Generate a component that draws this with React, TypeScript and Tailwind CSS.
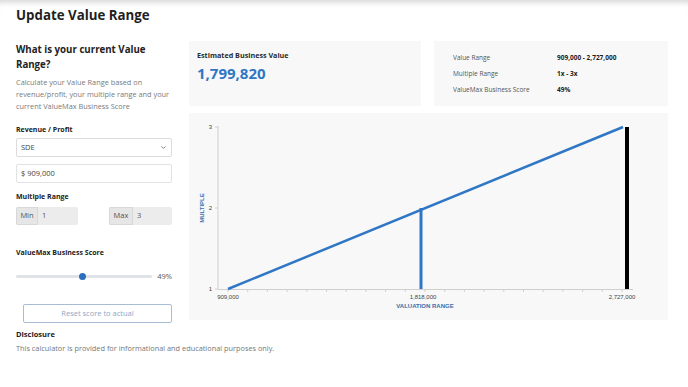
import { ChevronDown } from 'lucide-react';

const BLUE = '#2f77c4';

function ValueChart(): React.ReactElement {
    // x: 909,000 -> 39, 2,727,000 -> 433 ; y: 3 -> 14, 1 -> 176
    const ticks = Array.from({ length: 21 }, (_, i) => 39 + i * 19.7);
    return (
        <svg width="479" height="207" viewBox="0 0 479 207" className="block">
            <line x1="29" y1="13" x2="29" y2="176" stroke="#cfcfcf" strokeWidth="1" />
            <line x1="29" y1="176.5" x2="444" y2="176.5" stroke="#cfcfcf" strokeWidth="1" />
            {[14, 95, 176].map((y) => (
                <line key={y} x1="26" y1={y} x2="29" y2={y} stroke="#cfcfcf" strokeWidth="1" />
            ))}
            {ticks.map((x) => (
                <line key={x} x1={x} y1="176" x2={x} y2="179" stroke="#cfcfcf" strokeWidth="1" />
            ))}
            <g fontFamily="Liberation Sans, Arial, sans-serif" fontSize="6" fill="#444">
                <text x="23" y="16" textAnchor="end">3</text>
                <text x="23" y="97" textAnchor="end">2</text>
                <text x="23" y="178" textAnchor="end">1</text>
                <text x="39" y="186" textAnchor="middle">909,000</text>
                <text x="234" y="186" textAnchor="middle">1,818,000</text>
                <text x="433" y="186" textAnchor="middle">2,727,000</text>
            </g>
            <text x="236" y="195" textAnchor="middle" fontFamily="Liberation Sans, Arial, sans-serif" fontSize="6" fontWeight="700" fill="#3a6eae">
                VALUATION RANGE
            </text>
            <text
                x="0"
                y="0"
                transform="translate(15 95) rotate(-90)"
                textAnchor="middle"
                fontFamily="Liberation Sans, Arial, sans-serif"
                fontSize="6"
                fontWeight="700"
                fill="#3a6eae"
            >
                MULTIPLE
            </text>
            <line x1="39" y1="176" x2="434" y2="14" stroke={BLUE} strokeWidth="2.5" />
            <line x1="232" y1="95" x2="232" y2="176" stroke={BLUE} strokeWidth="3" />
            <line x1="438" y1="14" x2="438" y2="176" stroke="#000" strokeWidth="4" />
        </svg>
    );
}

export default function App(): React.ReactElement {
    return (
        <div
            className="w-[688px] h-[387px] bg-white text-[#222] overflow-hidden shadow-[inset_0_7px_6px_-5px_rgba(0,0,0,0.18)]"
            style={{ fontFamily: '"Open Sans", sans-serif' }}
        >
            <div className="pl-4 pr-5 pt-[6px]">
                <h1 className="text-[13.3px] leading-[18px] font-bold text-[#1f1f1f]">Update Value Range</h1>

                <div className="mt-[17px] flex gap-[17px]">
                    {/* Left form column */}
                    <div className="w-[156px] shrink-0">
                        <h2 className="text-[9.7px] leading-[15px] font-bold text-[#222] pt-[1px]">
                            What is your current Value Range?
                        </h2>
                        <p className="mt-[4px] text-[7.35px] leading-[12px] text-[#7a7a7a]">
                            Calculate your Value Range based on revenue/profit, your multiple range and your current ValueMax Business Score
                        </p>

                        <div className="mt-[13px] text-[7px] leading-[10px] font-bold text-[#222]">Revenue / Profit</div>
                        <div className="mt-[3px] h-[19px] flex items-center justify-between px-[4px] border border-[#dcdcdc] rounded-[2px] bg-white text-[7.5px] text-[#444]">
                            <span>SDE</span>
                            <ChevronDown className="w-[7px] h-[7px] text-[#555]" strokeWidth={2.5} />
                        </div>
                        <div className="mt-[7px] h-[19px] flex items-center px-[4px] border border-[#e2e2e2] rounded-[2px] bg-white text-[7.5px] text-[#444]">
                            $ 909,000
                        </div>

                        <div className="mt-[9px] text-[7px] leading-[10px] font-bold text-[#222]">Multiple Range</div>
                        <div className="mt-[5px] flex justify-between">
                            <div className="w-[62px] h-[18px] flex rounded-[2px] overflow-hidden text-[7.5px] text-[#555]">
                                <div className="w-[22px] flex items-center justify-center bg-[#e6e6e6] border border-[#d8d8d8]">Min</div>
                                <div className="flex-1 flex items-center pl-[4px] bg-[#ececec]">1</div>
                            </div>
                            <div className="w-[63px] h-[18px] flex rounded-[2px] overflow-hidden text-[7.5px] text-[#555]">
                                <div className="w-[24px] flex items-center justify-center bg-[#e6e6e6] border border-[#d8d8d8]">Max</div>
                                <div className="flex-1 flex items-center pl-[4px] bg-[#ececec]">3</div>
                            </div>
                        </div>

                        <div className="mt-[23px] text-[7px] leading-[10px] font-bold text-[#222]">ValueMax Business Score</div>
                        <div className="mt-[13px] flex items-center justify-between">
                            <div className="relative w-[136px] h-[3px] rounded-full bg-[#dfe2e6]">
                                <div className="absolute left-[63px] top-[-2px] w-[7px] h-[7px] rounded-full bg-[#2c70bd]" />
                            </div>
                            <span className="text-[7.5px] text-[#555]">49%</span>
                        </div>

                        <button className="mt-[22px] ml-[7px] w-[149px] h-[19px] rounded-[2px] border border-[#a9bcd6] bg-white text-[7.5px] text-[#8ea6c6]">
                            Reset score to actual
                        </button>
                    </div>

                    {/* Right results column */}
                    <div className="w-[479px] shrink-0">
                        <div className="flex gap-[13px]">
                            <div className="w-[232px] h-[65px] bg-[#f8f8f8] px-[8px] pt-[9px]">
                                <div className="text-[7.2px] leading-[10px] font-bold text-[#2a2a2a]">Estimated Business Value</div>
                                <div className="mt-[3px] text-[15px] leading-[20px] font-bold text-[#2f77c4]">1,799,820</div>
                            </div>
                            <div className="w-[234px] h-[65px] bg-[#f8f8f8] pl-[19px] pt-[9px] text-[6.5px] leading-[16px]">
                                <div className="grid grid-cols-[104px_1fr]">
                                    <span className="text-[#555]">Value Range</span>
                                    <span className="font-bold text-[#222]">909,000 - 2,727,000</span>
                                    <span className="text-[#555]">Multiple Range</span>
                                    <span className="font-bold text-[#222]">1x - 3x</span>
                                    <span className="text-[#555]">ValueMax Business Score</span>
                                    <span className="font-bold text-[#222]">49%</span>
                                </div>
                            </div>
                        </div>
                        <div className="mt-[7px] h-[207px] bg-[#f8f8f8]">
                            <ValueChart />
                        </div>
                    </div>
                </div>

                <div className="mt-[6px] text-[7.5px] leading-[11px] font-bold text-[#222]">Disclosure</div>
                <p className="mt-[3px] text-[7.35px] leading-[11px] text-[#777]">
                    This calculator is provided for informational and educational purposes only.
                </p>
            </div>
        </div>
    );
}
